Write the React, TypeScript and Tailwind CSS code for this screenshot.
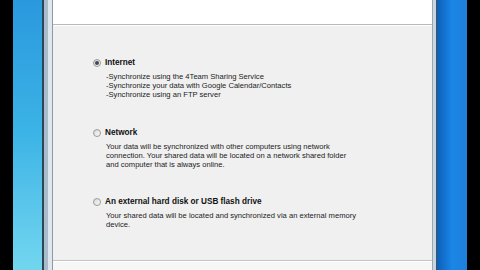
const OPTIONS = [
  {
    title: 'Internet',
    checked: true,
    lines: [
      '-Synchronize using the 4Team Sharing Service',
      '-Synchronize your data with Google Calendar/Contacts',
      '-Synchronize using an FTP server',
    ],
  },
  {
    title: 'Network',
    checked: false,
    lines: [
      'Your data will be synchronized with other computers using network',
      'connection. Your shared data will be located on a network shared folder',
      'and computer that is always online.',
    ],
  },
  {
    title: 'An external hard disk or USB flash drive',
    checked: false,
    lines: [
      'Your shared data will be located and synchronized via an external memory',
      'device.',
    ],
  },
];

function Radio({ checked }: { checked: boolean }) {
  return (
    <span className="w-[8px] h-[8px] rounded-full border border-[#9a9a9a] bg-gradient-to-br from-[#d8d8d8] to-[#fafafa] flex items-center justify-center shrink-0">
      {checked && <span className="w-[4px] h-[4px] rounded-full bg-[#3a4a5a]" />}
    </span>
  );
}

export default function App() {
  return (
    <div className="w-[480px] h-[270px] flex bg-black overflow-hidden" style={{ fontFamily: '"Liberation Sans", Arial, sans-serif' }}>
      {/* desktop, left */}
      <div className="w-[13px] bg-black" />
      <div className="w-[29px] bg-gradient-to-b from-[#2a98de] via-[#3cb4e6] to-[#72d6ef]" />

      {/* window frame, left */}
      <div className="w-[2px] bg-[#2c4656]" />
      <div className="w-[4px] bg-[#a8bccb]" />
      <div className="w-[4px] bg-[#dfe7ee]" />
      <div className="w-[1px] bg-[#8d9aa6]" />

      {/* dialog content */}
      <div className="flex-1 flex flex-col bg-[#f0f0f0]">
        <div className="h-[25px] shrink-0 bg-white border-b border-[#b9b9b9]" />
        <div className="h-px shrink-0 bg-white" />
        <div className="flex-1 min-h-0 overflow-hidden flex flex-col gap-[28.5px] pt-[32px] pl-[40px]">
          {OPTIONS.map((o) => (
            <div key={o.title} className="shrink-0 flex flex-col">
              <div className="h-[10px] flex items-center gap-[4px]">
                <Radio checked={o.checked} />
                <span className="text-[8.2px] font-bold text-[#111] leading-[10px]">{o.title}</span>
              </div>
              <div className="mt-[4px] pl-[13px] flex flex-col text-[7.6px] leading-[9px] text-[#222]">
                {o.lines.map((l) => (
                  <span key={l} className="whitespace-nowrap">{l}</span>
                ))}
              </div>
            </div>
          ))}
        </div>
        <div className="h-px shrink-0 bg-[#c4c4c4]" />
        <div className="h-[9px] shrink-0 bg-[#f7f7f7] border-t border-white" />
      </div>

      {/* window frame, right */}
      <div className="w-[1px] bg-[#9aa8b4]" />
      <div className="w-[3px] bg-[#c9d6e0]" />
      <div className="w-[1px] bg-[#3b5566]" />

      {/* desktop, right */}
      <div className="w-[30px] bg-gradient-to-r from-[#0d5fb8] via-[#1a86e6] to-[#1f7fdc]" />
      <div className="w-[13px] bg-black" />
    </div>
  );
}
